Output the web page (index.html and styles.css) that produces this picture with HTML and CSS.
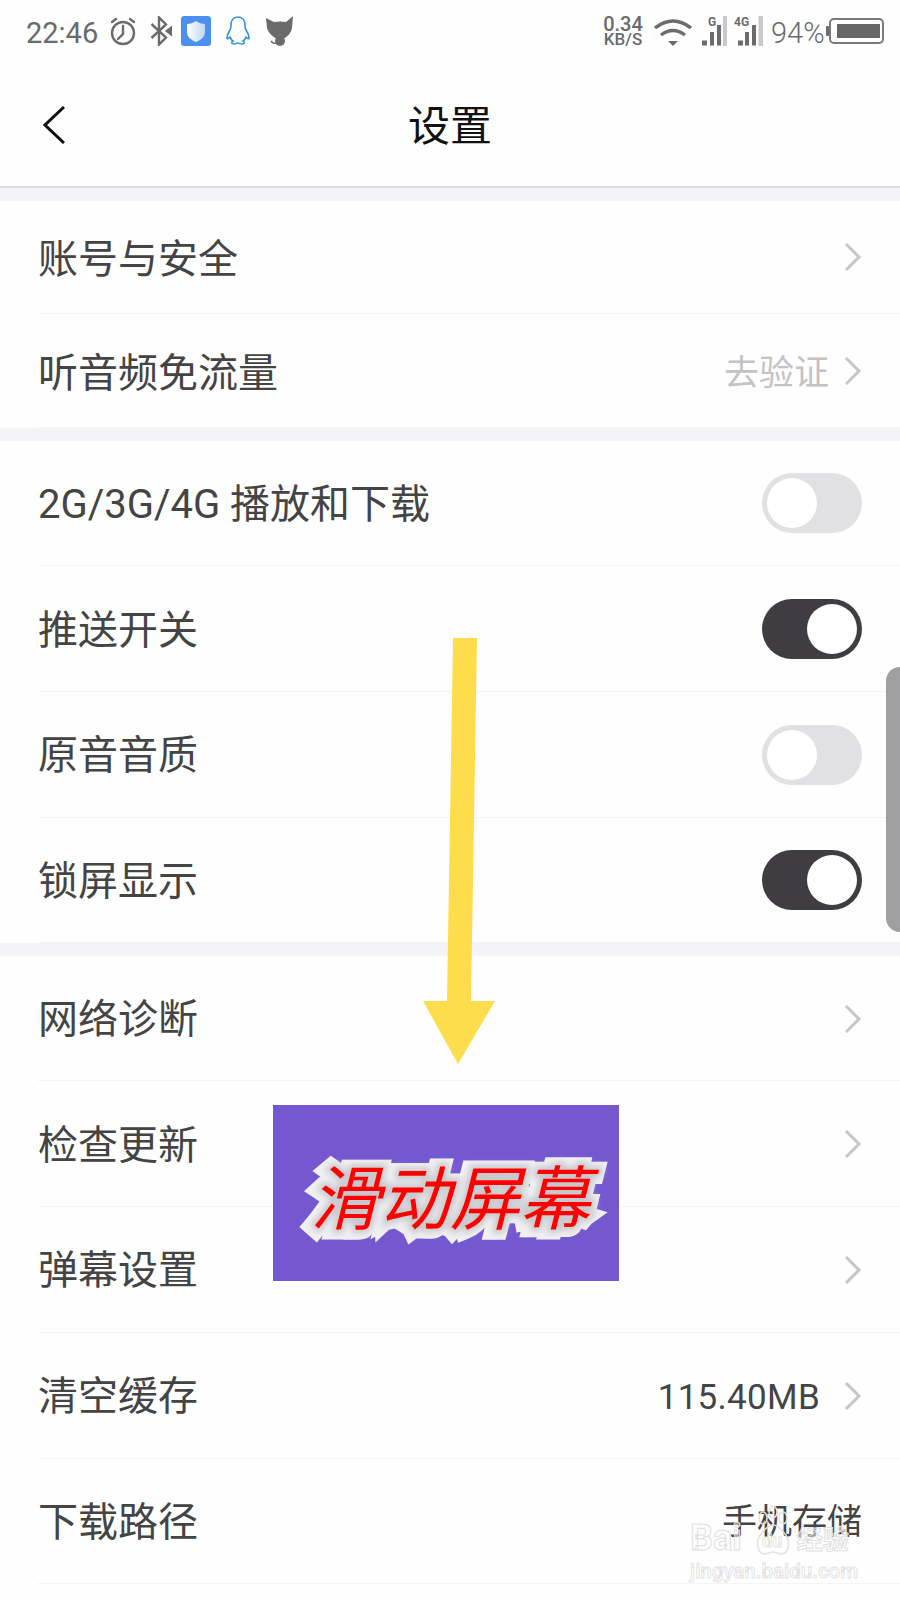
FILE: index.html
```html
<!DOCTYPE html>
<html lang="zh-CN">
<head>
    <meta charset="UTF-8">
    <meta name="viewport" content="width=device-width, initial-scale=1.0">
    <title>设置</title>
    <link rel="stylesheet" href="styles.css">
</head>
<body>
    <div class="phone">
        <div class="status-bar">
            <div class="status-left">
                <span class="time">22:46</span>
                <svg class="ic-alarm" viewBox="0 0 28 30" fill="none" stroke="#6b6b6b" stroke-width="2.4" stroke-linecap="round"><circle cx="14" cy="17" r="11"/><path d="M14 10v8l-5 5M3 6l4-3M25 6l-4-3"/></svg>
                <svg class="ic-bt" viewBox="0 0 22 30" fill="none" stroke="#6b6b6b" stroke-width="2.4"><path d="M1.5 8L16 21.5l-7 7V1.5l7 7L1.5 22"/><path d="M15 15l7-5.5v11z" fill="#6b6b6b" stroke="none"/></svg>
                <svg class="ic-shield" viewBox="0 0 30 30"><defs><linearGradient id="sh" x1="0" y1="0" x2="1" y2="0"><stop offset="0" stop-color="#ffffff"/><stop offset="1" stop-color="#bfd6f6"/></linearGradient></defs><rect width="30" height="30" rx="3" fill="#4a90ee"/><path d="M15 5c3 2 6 3 9 3v8c0 5-4 8-9 10-5-2-9-5-9-10V8c3 0 6-1 9-3z" fill="url(#sh)"/></svg>
                <svg class="ic-qq" viewBox="0 0 26 30" fill="none" stroke="#2b93d9" stroke-width="1.6"><path d="M13 1c5 0 7 4 7 8 0 2 0 3 1 5 2 3 3 6 3 8 0 1-1 1-3-1-1 2-1 3-3 4 2 1 2 3-1 3-2 0-3-1-4-1s-2 1-4 1c-3 0-3-2-1-3-2-1-2-2-3-4-2 2-3 2-3 1 0-2 1-5 3-8 1-2 1-3 1-5 0-4 2-8 7-8z"/></svg>
                <svg class="ic-cat" viewBox="0 0 28 30" fill="#6b6b6b"><path d="M0 2l8 4q6-1 12 0l7-6-1 12q-1 7-9 11h-6Q3 19 1 12z"/><circle cx="14" cy="25" r="5"/><path d="M10 27q-3 1-5-2" fill="none" stroke="#6b6b6b" stroke-width="1.6"/></svg>
            </div>
            <div class="status-right">
                <div class="net-speed"><span class="net-num">0.34</span><span>KB/S</span></div>
                <svg class="ic-wifi" viewBox="0 0 38 27" fill="none" stroke="#6b6b6b" stroke-width="3.4"><path d="M1 9Q19-5 37 9M7 16q12-9 24 0"/><path d="M14 22h10l-5 5z" fill="#6b6b6b" stroke="none"/></svg>
                <svg class="ic-signal" viewBox="0 0 25 30"><text x="6" y="10" class="sig-text">G</text><rect y="24.5" width="5" height="5" fill="#6b6b6b"/><rect x="8" y="16" width="4" height="13.500" fill="#6b6b6b"/><rect x="15" y="9" width="4" height="20.500" fill="#6b6b6b"/><rect x="21" width="4" height="30" fill="#c9c9cb"/></svg>
                <svg class="ic-signal2" viewBox="0 0 29 30"><text x="0" y="10" class="sig-text">4G</text><rect x="4" y="24.5" width="5" height="5" fill="#6b6b6b"/><rect x="11" y="16" width="4" height="13.500" fill="#6b6b6b"/><rect x="18" y="9" width="4" height="20.500" fill="#6b6b6b"/><rect x="24.500" width="4.500" height="30" fill="#c9c9cb"/></svg>
                <span class="battery-pct">94%</span>
                <svg class="ic-battery" viewBox="0 0 58 26"><rect y="8" width="3" height="10" rx="1" fill="#6b6b6b"/><rect x="4" y="1" width="53" height="24" rx="4" fill="none" stroke="#7a7a7a" stroke-width="2"/><rect x="11" y="6" width="43" height="14" fill="#666"/></svg>
            </div>
        </div>

        <div class="nav-bar">
            <div class="nav-back">
                <svg viewBox="0 0 22 38" width="22" height="38" fill="none" stroke="#111" stroke-width="3"><path d="M21 1L2 19l19 18"/></svg>
            </div>
            <h1 class="nav-title">设置</h1>
            <div></div>
        </div>

        <div class="group">
            <div class="row row-short">
                <span class="row-label">账号与安全</span>
                <span class="row-right"><svg class="chevron" viewBox="0 0 18 30"><path d="M2 2l13 13L2 28"/></svg></span>
            </div>
            <div class="row row-short">
                <span class="row-label">听音频免流量</span>
                <span class="row-right"><span class="row-value muted">去验证</span><svg class="chevron" viewBox="0 0 18 30"><path d="M2 2l13 13L2 28"/></svg></span>
            </div>
        </div>

        <div class="group">
            <div class="row">
                <span class="row-label">2G/3G/4G 播放和下载</span>
                <span class="switch"></span>
            </div>
            <div class="row">
                <span class="row-label">推送开关</span>
                <span class="switch on"></span>
            </div>
            <div class="row">
                <span class="row-label">原音音质</span>
                <span class="switch"></span>
            </div>
            <div class="row">
                <span class="row-label">锁屏显示</span>
                <span class="switch on"></span>
            </div>
        </div>

        <div class="group">
            <div class="row">
                <span class="row-label">网络诊断</span>
                <span class="row-right"><svg class="chevron" viewBox="0 0 18 30"><path d="M2 2l13 13L2 28"/></svg></span>
            </div>
            <div class="row">
                <span class="row-label">检查更新</span>
                <span class="row-right"><svg class="chevron" viewBox="0 0 18 30"><path d="M2 2l13 13L2 28"/></svg></span>
            </div>
            <div class="row">
                <span class="row-label">弹幕设置</span>
                <span class="row-right"><svg class="chevron" viewBox="0 0 18 30"><path d="M2 2l13 13L2 28"/></svg></span>
            </div>
            <div class="row">
                <span class="row-label">清空缓存</span>
                <span class="row-right"><span class="row-value size">115.40MB</span><svg class="chevron" viewBox="0 0 18 30"><path d="M2 2l13 13L2 28"/></svg></span>
            </div>
            <div class="row">
                <span class="row-label">下载路径</span>
                <span class="row-right"><span class="row-value no-chevron">手机存储</span></span>
            </div>
        </div>

        <!-- annotations added on top of the screenshot -->
        <div class="scroll-thumb"></div>
        <svg class="arrow" viewBox="0 0 72 426"><path d="M30 0h24l-6 363h24L35 426 0 363h24z" fill="#fedd4d"/></svg>
        <div class="slide-tag"><span class="slide-text" data-text="滑动屏幕">滑动屏幕</span></div>
        <div class="watermark">
            <div class="wm-logo">
                <span class="wm-bai">Bai</span>
                <svg class="wm-paw" viewBox="0 0 38 50" fill="none" stroke="#e2e2e2" stroke-width="1.5"><ellipse cx="9" cy="13" rx="4" ry="6"/><ellipse cx="19" cy="7" rx="4" ry="6"/><ellipse cx="29" cy="13" rx="4" ry="6"/><path d="M19 20c6 0 8 5 12 9 5 5 5 20-4 20-3 0-5-2-8-2s-5 2-8 2C2 49 2 34 7 29c4-4 6-9 12-9z"/><text x="8" y="42" class="wm-du">du</text></svg>
                <span class="wm-cn">经验</span>
            </div>
            <div class="wm-url">jingyan.baidu.com</div>
        </div>
    </div>
</body>
</html>
```

FILE: styles.css
```css
html, body {
    margin: 0;
    padding: 0;
}
body {
    background-color: #fff;
    font-family: Roboto, "Noto Sans CJK SC", sans-serif;
}
.phone {
    position: relative;
    width: 900px;
    height: 1600px;
    overflow: hidden;
    background-color: #fefefe;
}
.status-bar {
    height: 62px;
    padding: 0 16px 0 26px;
    box-sizing: border-box;
    display: flex;
    justify-content: space-between;
    align-items: center;
    color: #6b6b6b;
}
.status-left, .status-right {
    display: flex;
    align-items: center;
}
.time {
    font-size: 29px;
    width: 72px;
    margin-top: 3px;
}
.ic-alarm { width: 28px; height: 30px; margin-left: 11px; }
.ic-bt { width: 22px; height: 30px; margin-left: 13px; }
.ic-shield { width: 30px; height: 30px; margin-left: 9px; }
.ic-qq { width: 26px; height: 30px; margin-left: 14px; }
.ic-cat { width: 28px; height: 30px; margin-left: 15px; }
.net-speed {
    width: 40px;
    display: flex;
    flex-direction: column;
    align-items: center;
    font-size: 17px;
    font-weight: 500;
    line-height: 15px;
    margin-top: 2px;
}
.net-num {
    font-size: 20px;
}
.ic-wifi { width: 38px; height: 27px; margin-left: 11px; margin-top: 2px; }
.ic-signal { width: 25px; height: 30px; margin-left: 10px; }
.ic-signal2 { width: 29px; height: 30px; margin-left: 7px; }
.sig-text {
    font-size: 12px;
    font-weight: 700;
    fill: #6b6b6b;
}
.battery-pct {
    font-size: 29px;
    font-weight: 300;
    margin-left: 8px;
    margin-top: 3px;
    width: 55px;
}
.ic-battery { width: 58px; height: 26px; }
.nav-bar {
    height: 126px;
    padding-left: 43px;
    padding-bottom: 4px;
    box-sizing: border-box;
    display: grid;
    grid-template-columns: 1fr auto 1fr;
    align-items: center;
    border-bottom: 2px solid #dedee2;
}
.nav-back {
    display: flex;
    margin-top: 5px;
}
.nav-title {
    margin: 0 43px 0 0;
    font-size: 42px;
    font-weight: 400;
    color: #111;
}
.group {
    padding-top: 12.5px;
    background-color: #f4f3f6;
}
.row {
    position: relative;
    height: 125.7px;
    padding: 0 38px;
    box-sizing: border-box;
    display: flex;
    justify-content: space-between;
    align-items: center;
    background-color: #fefefe;
}
.row::after {
    content: "";
    position: absolute;
    left: 38px;
    right: 0;
    bottom: 0;
    height: 1px;
    background-color: #f4f4f5;
}
.row-short {
    height: 113.75px;
}
.row-label {
    font-size: 40px;
    color: #444;
    padding-bottom: 5px;
}
.row-short .row-label {
    padding-bottom: 2px;
}
.row-right {
    display: flex;
    align-items: center;
}
.row-value {
    font-size: 35px;
    color: #444;
    margin-right: 24px;
}
.row-value.size {
    padding-top: 3px;
    letter-spacing: 0.3px;
}
.row-value.muted {
    color: #c3c3c5;
    margin-right: 15px;
    padding-bottom: 3px;
}
.row-value.no-chevron {
    margin-right: 0;
    padding-bottom: 5px;
}
.chevron {
    width: 18px;
    height: 30px;
    fill: none;
    stroke: #c6c6c8;
    stroke-width: 3;
}
.switch {
    position: relative;
    width: 100px;
    height: 60px;
    border-radius: 30px;
    background-color: #e1e0e3;
}
.switch::after {
    content: "";
    position: absolute;
    top: 5px;
    left: 5px;
    width: 50px;
    height: 50px;
    border-radius: 50%;
    background-color: #fff;
}
.switch.on {
    background-color: #3f3d41;
}
.switch.on::after {
    left: 45px;
}
.scroll-thumb {
    position: absolute;
    top: 667px;
    right: 0;
    width: 14px;
    height: 265px;
    border-radius: 16px 0 0 16px;
    background-color: #9f9ea1;
}
.arrow {
    position: absolute;
    left: 423px;
    top: 638px;
    width: 72px;
    height: 426px;
}
.slide-tag {
    position: absolute;
    left: 273px;
    top: 1105px;
    width: 346px;
    height: 176px;
    display: flex;
    justify-content: center;
    align-items: center;
    background-color: #7558d0;
}
.slide-text {
    position: relative;
    z-index: 0;
    margin-left: 8px;
    font-size: 70px;
    font-style: italic;
    white-space: nowrap;
    color: #f00;
}
.slide-text::before, .slide-text::after {
    content: attr(data-text);
    position: absolute;
    left: 0;
    top: 0;
}
.slide-text::before {
    z-index: -2;
    left: -3px;
    top: 1px;
    -webkit-text-stroke: 18px #f1f0f3;
}
.slide-text::after {
    z-index: -1;
    color: #c4c4c8;
    -webkit-text-stroke: 7px #c8c8cc;
    filter: blur(3px);
}
.watermark {
    position: absolute;
    left: 690px;
    top: 1505px;
    width: 162px;
    display: flex;
    flex-direction: column;
    gap: 5px;
}
.wm-logo {
    height: 50px;
    display: flex;
    align-items: flex-end;
}
.wm-bai {
    font-size: 36px;
    font-weight: 700;
    line-height: 34px;
    color: rgba(255, 255, 255, 0.5);
    -webkit-text-stroke: 1px #dedede;
}
.wm-paw {
    width: 38px;
    height: 50px;
    margin-left: 12px;
}
.wm-du {
    font-size: 18px;
    font-weight: 700;
    fill: rgba(255, 255, 255, 0.5);
    stroke: #e2e2e2;
    stroke-width: 0.8;
}
.wm-cn {
    font-size: 26px;
    font-weight: 700;
    line-height: 30px;
    margin-left: 5px;
    color: rgba(255, 255, 255, 0.5);
    -webkit-text-stroke: 1px #dedede;
}
.wm-url {
    font-size: 20.5px;
    font-weight: 500;
    line-height: 22px;
    white-space: nowrap;
    color: rgba(255, 255, 255, 0.6);
    -webkit-text-stroke: 0.8px #e0e0e0;
}
```
